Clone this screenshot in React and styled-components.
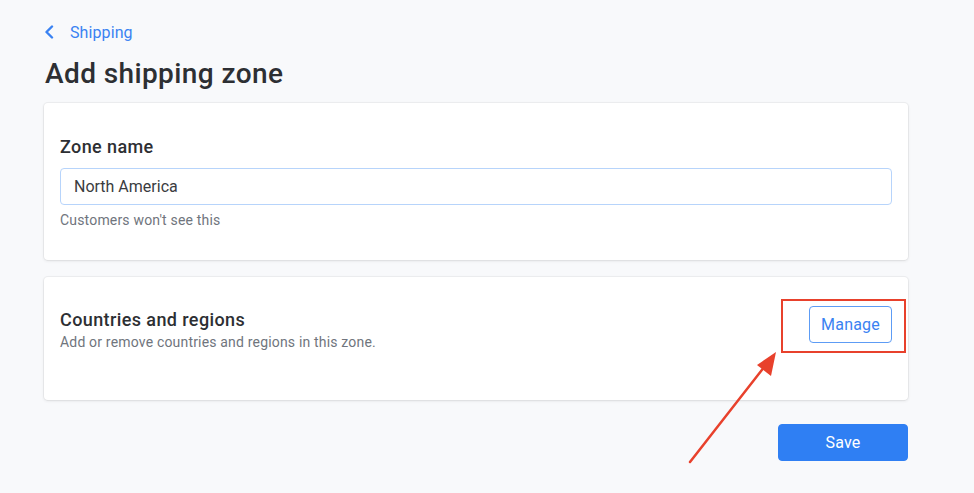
import React from 'react'
import styled, { createGlobalStyle } from 'styled-components'

const GlobalStyle = createGlobalStyle`
  html, body {
    margin: 0;
    padding: 0;
    background: #f8f9fb;
    font-family: Roboto, "Liberation Sans", Arial, sans-serif;
    color: #2d2f33;
  }
  * { box-sizing: border-box; }
`

const Page = styled.div`
  position: relative;
  width: 974px;
  height: 493px;
  padding: 22px 66px 0 44px;
  overflow: hidden;
`

const BackLink = styled.a`
  display: flex;
  align-items: center;
  gap: 16px;
  height: 20px;
  color: #3a82f2;
  font-size: 16px;
  letter-spacing: 0.1px;
  text-decoration: none;
  cursor: pointer;
`

const Title = styled.h1`
  margin: 16px 0 0 1px;
  font-size: 28px;
  line-height: 32px;
  font-weight: 500;
  letter-spacing: 0.4px;
  color: #2d2f33;
`

const Card = styled.section`
  margin-top: ${(p) => p.$top || 0}px;
  background: #fff;
  border-radius: 4px;
  box-shadow: 0 0 0 1px rgba(63, 63, 68, 0.05), 0 1px 3px rgba(63, 63, 68, 0.12);
  padding: ${(p) => p.$padding};
`

const Label = styled.h2`
  margin: 0;
  font-size: 18px;
  line-height: 20px;
  font-weight: 500;
  letter-spacing: 0.4px;
  color: #2d2f33;
`

const Input = styled.input`
  display: block;
  width: 100%;
  height: 37px;
  margin-top: 11px;
  padding: 0 13px;
  border: 1px solid #b7d4fb;
  border-radius: 4px;
  font-family: inherit;
  font-size: 16px;
  color: #3a3c40;
  outline: none;
`

const Help = styled.p`
  margin: ${(p) => p.$gap || 6}px 0 0;
  font-size: 14px;
  line-height: 18px;
  letter-spacing: 0.18px;
  color: #70757d;
`

const Row = styled.div`
  display: flex;
  justify-content: space-between;
  align-items: flex-start;
`

const TextBlock = styled.div`
  padding-top: 4px;
`

const Button = styled.button`
  height: 37px;
  width: ${(p) => (p.$primary ? '130px' : 'auto')};
  padding: 0 11px;
  border-radius: 4px;
  border: 1px solid ${(p) => (p.$primary ? '#2f7ff3' : '#5d9cf5')};
  background: ${(p) => (p.$primary ? '#2f7ff3' : '#fff')};
  color: ${(p) => (p.$primary ? '#fff' : '#3a82f2')};
  font-family: inherit;
  font-size: 16px;
  letter-spacing: 0.2px;
  cursor: pointer;
`

const Footer = styled.div`
  display: flex;
  justify-content: flex-end;
  margin-top: 24px;
`

const Highlight = styled.div`
  position: absolute;
  left: 781px;
  top: 299px;
  width: 125px;
  height: 54px;
  border: 2.5px solid #e8412c;
  pointer-events: none;
`

const Arrow = styled.svg`
  position: absolute;
  left: 0;
  top: 0;
  pointer-events: none;
`

export default function App() {
  return (
    <>
      <GlobalStyle />
      <Page>
        <BackLink>
          <svg width="10" height="14" viewBox="0 0 10 14" fill="none">
            <path d="M8 1.5 L2.5 7 L8 12.5" stroke="#3a82f2" strokeWidth="2.4" strokeLinecap="round" strokeLinejoin="round" />
          </svg>
          Shipping
        </BackLink>
        <Title>Add shipping zone</Title>

        <Card $top={13} $padding="34px 16px 31px">
          <Label>Zone name</Label>
          <Input defaultValue="North America" />
          <Help>Customers won't see this</Help>
        </Card>

        <Card $top={17} $padding="29px 16px 49px">
          <Row>
            <TextBlock>
              <Label>Countries and regions</Label>
              <Help $gap={3}>Add or remove countries and regions in this zone.</Help>
            </TextBlock>
            <Button>Manage</Button>
          </Row>
        </Card>

        <Footer>
          <Button $primary>Save</Button>
        </Footer>

        <Highlight />
        <Arrow width="974" height="493" viewBox="0 0 974 493">
          <line x1="690" y1="462" x2="765" y2="366" stroke="#e8412c" strokeWidth="2.5" strokeLinecap="round" />
          <path d="M776 352 L771 376 L757 365 Z" fill="#e8412c" />
        </Arrow>
      </Page>
    </>
  )
}
